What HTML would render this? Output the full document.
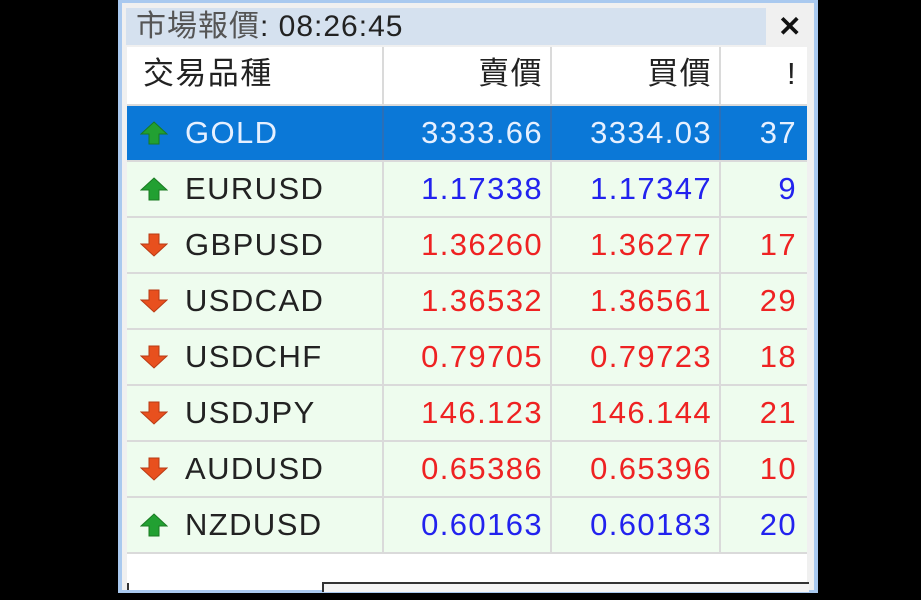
<!DOCTYPE html>
<html><head><meta charset="utf-8"><style>
body{margin:0;background:#000;width:921px;height:600px;overflow:hidden;font-family:"Liberation Sans","Noto Sans CJK TC",sans-serif}
.win{position:absolute;left:118px;top:0;width:700px;height:593px;background:#a9c9ef}
.in{position:absolute;left:4px;top:3px;width:692px;height:587px;background:#f0f0f0}
.title{position:absolute;left:4px;top:5px;width:640px;height:37px;background:#d5e1ef;font-size:30px;line-height:37px;color:#222;padding-left:10px;box-sizing:border-box;letter-spacing:1px}
.title span{color:#555}
.x{position:absolute;left:656px;top:5px;font-size:28px;line-height:37px;font-weight:bold;color:#111}
.tbl{position:absolute;left:5px;top:44px;width:680px;height:543px;background:#fff}
.row{position:absolute;left:0;width:680px;height:56px;border-bottom:2px solid #dadada;box-sizing:border-box;font-size:31px;line-height:54px;letter-spacing:1.4px}
.row div{position:absolute;top:0;height:100%;border-right:2px solid #dadada;box-sizing:border-box;text-align:right;padding-right:7px}
.c1{left:0;width:257px;text-align:left!important;padding-left:58px}
.c2{left:257px;width:168px}.c3{left:425px;width:169px}.c4{left:594px;width:86px;border-right:none!important;padding-right:10px!important}
.g{background:#eefcee}.up{color:#2222ee}.dn{color:#ee2222}
.sel{background:#0b78d7;color:#e6f0ff}.sel div{border-color:#2a6fb8}
.hd div{color:#222}
svg{position:absolute;left:13px;top:15px}
</style></head><body>
<div class="win"><div class="in">
<div class="title"><span>市場報價</span>: 08:26:45</div>
<div class="x">✕</div>
<div class="tbl">
<div class="row hd" style="top:0;height:59px"><div class="c1" style="padding-left:16px">交易品種</div><div class="c2">賣價</div><div class="c3">買價</div><div class="c4">!</div></div>
<div class="row sel" style="top:59px"><div class="c1"><svg width="28" height="24"><path d="M14 1L27 13H19V23H9V13H1Z" fill="#22a032" stroke="#1a7a22"/></svg>GOLD</div><div class="c2">3333.66</div><div class="c3">3334.03</div><div class="c4">37</div></div>
<div class="row g up" style="top:115px"><div class="c1" style="color:#222"><svg width="28" height="24"><path d="M14 1L27 13H19V23H9V13H1Z" fill="#22a032" stroke="#1a7a22"/></svg>EURUSD</div><div class="c2">1.17338</div><div class="c3">1.17347</div><div class="c4">9</div></div>
<div class="row g dn" style="top:171px"><div class="c1" style="color:#222"><svg width="28" height="24"><path d="M9 1H19V11H27L14 23L1 11H9Z" fill="#e8501e" stroke="#b83a14"/></svg>GBPUSD</div><div class="c2">1.36260</div><div class="c3">1.36277</div><div class="c4">17</div></div>
<div class="row g dn" style="top:227px"><div class="c1" style="color:#222"><svg width="28" height="24"><path d="M9 1H19V11H27L14 23L1 11H9Z" fill="#e8501e" stroke="#b83a14"/></svg>USDCAD</div><div class="c2">1.36532</div><div class="c3">1.36561</div><div class="c4">29</div></div>
<div class="row g dn" style="top:283px"><div class="c1" style="color:#222"><svg width="28" height="24"><path d="M9 1H19V11H27L14 23L1 11H9Z" fill="#e8501e" stroke="#b83a14"/></svg>USDCHF</div><div class="c2">0.79705</div><div class="c3">0.79723</div><div class="c4">18</div></div>
<div class="row g dn" style="top:339px"><div class="c1" style="color:#222"><svg width="28" height="24"><path d="M9 1H19V11H27L14 23L1 11H9Z" fill="#e8501e" stroke="#b83a14"/></svg>USDJPY</div><div class="c2">146.123</div><div class="c3">146.144</div><div class="c4">21</div></div>
<div class="row g dn" style="top:395px"><div class="c1" style="color:#222"><svg width="28" height="24"><path d="M9 1H19V11H27L14 23L1 11H9Z" fill="#e8501e" stroke="#b83a14"/></svg>AUDUSD</div><div class="c2">0.65386</div><div class="c3">0.65396</div><div class="c4">10</div></div>
<div class="row g up" style="top:451px"><div class="c1" style="color:#222"><svg width="28" height="24"><path d="M14 1L27 13H19V23H9V13H1Z" fill="#22a032" stroke="#1a7a22"/></svg>NZDUSD</div><div class="c2">0.60163</div><div class="c3">0.60183</div><div class="c4">20</div></div>
<div style="position:absolute;left:195px;top:535px;width:485px;height:8px;border-top:2px solid #333;border-left:2px solid #333;background:#f4f4f4"></div>
<div style="position:absolute;left:0;top:536px;width:2px;height:7px;background:#333"></div>
</div>
</div></div>
</body></html>
